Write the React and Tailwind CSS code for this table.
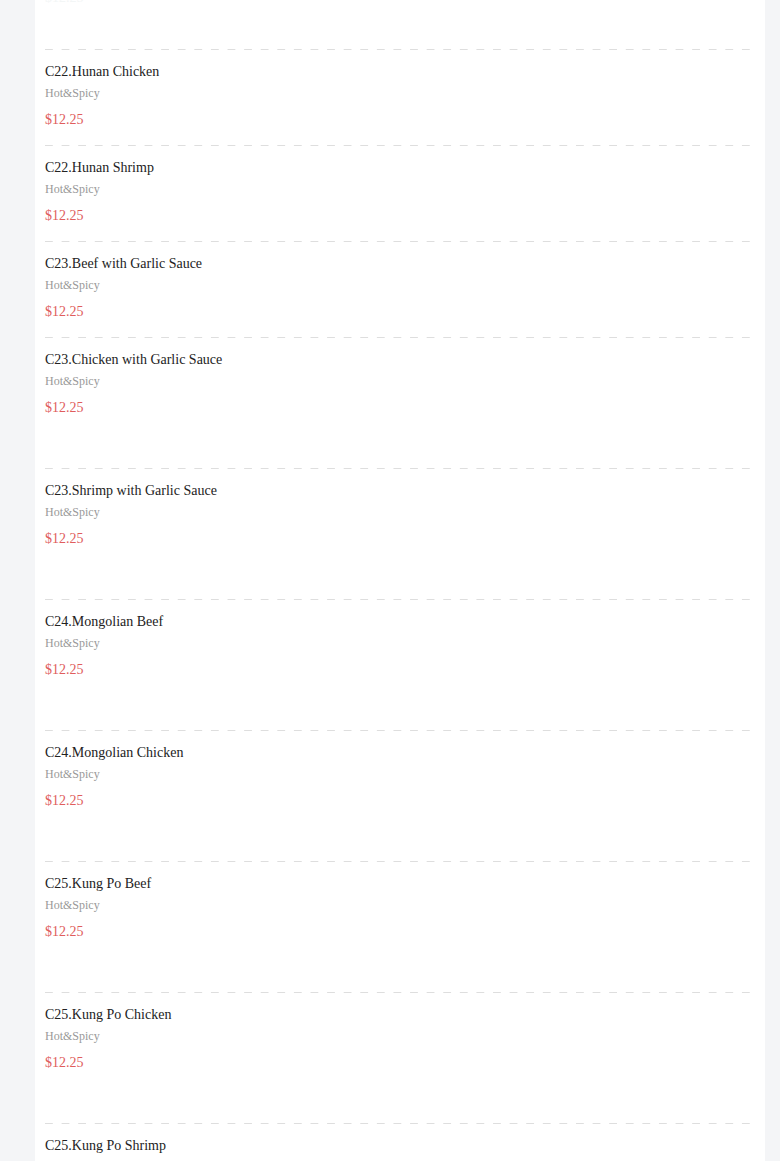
const items = [
  { name: "C22.Hunan Chicken", tall: false },
  { name: "C22.Hunan Shrimp", tall: false },
  { name: "C23.Beef with Garlic Sauce", tall: false },
  { name: "C23.Chicken with Garlic Sauce", tall: true },
  { name: "C23.Shrimp with Garlic Sauce", tall: true },
  { name: "C24.Mongolian Beef", tall: true },
  { name: "C24.Mongolian Chicken", tall: true },
  { name: "C25.Kung Po Beef", tall: true },
  { name: "C25.Kung Po Chicken", tall: true },
  { name: "C25.Kung Po Shrimp", tall: true },
];

function Dashes() {
  return (
    <div className="h-px w-full bg-[linear-gradient(to_right,#dedede_50%,transparent_50%)] bg-[length:16.6px_1px] bg-repeat-x" />
  );
}

function MenuItem({ name, tall }) {
  return (
    <div>
      <Dashes />
      <div className={`pt-3 ${tall ? "pb-[50px]" : "pb-[15px]"}`}>
        <p className="text-[14px] leading-[20px] text-[#222]">{name}</p>
        <p className="mt-[2px] text-[12px] leading-[18px] text-[#999]">Hot&amp;Spicy</p>
        <p className="mt-[8px] text-[14px] leading-[20px] text-[#e05d5d]">$12.25</p>
      </div>
    </div>
  );
}

export default function App() {
  return (
    <div className="min-h-screen bg-[#f4f5f7] pl-[35px] pr-[15px] font-['Liberation_Serif',serif]">
      <div className="bg-white px-[10px] h-[1161px] overflow-hidden">
        {/* tail of previous item, fading out */}
        <div className="h-[49px] overflow-hidden">
          <p className="-mt-[12px] text-[14px] leading-[20px] text-[#f3f6f6]">$12.25</p>
        </div>
        {items.map((it) => (
          <MenuItem key={it.name} {...it} />
        ))}
      </div>
    </div>
  );
}
